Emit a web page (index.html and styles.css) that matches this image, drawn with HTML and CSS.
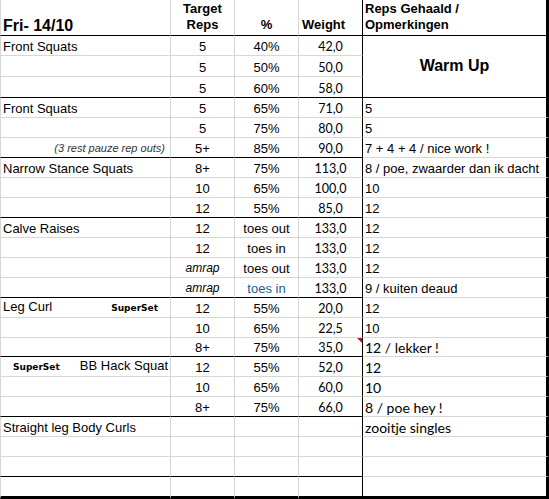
FILE: index.html
```html
<!DOCTYPE html>
<html>
<head>
<meta charset="utf-8">
<link rel="stylesheet" href="styles.css">
</head>
<body>
<div class="sheet">
  <div class="cell a hd title">Fri- 14/10</div>
  <div class="cell hd c"><span class="ctr">Target<br>Reps</span></div>
  <div class="cell hd c">%</div>
  <div class="cell hd d">Weight</div>
  <div class="cell hd e"><span>Reps Gehaald /<br>Opmerkingen</span></div>

  <div class="cell a">Front Squats</div>
  <div class="cell c">5</div>
  <div class="cell c">40%</div>
  <div class="cell d c w">42,0</div>
  <div class="cell e warm">Warm Up</div>

  <div class="cell a"></div>
  <div class="cell c">5</div>
  <div class="cell c">50%</div>
  <div class="cell d c w">50,0</div>

  <div class="cell a end"></div>
  <div class="cell c end">5</div>
  <div class="cell c end">60%</div>
  <div class="cell d c w end">58,0</div>

  <div class="cell a">Front Squats</div>
  <div class="cell c">5</div>
  <div class="cell c">65%</div>
  <div class="cell d c w">71,0</div>
  <div class="cell e">5</div>

  <div class="cell a"></div>
  <div class="cell c">5</div>
  <div class="cell c">75%</div>
  <div class="cell d c w">80,0</div>
  <div class="cell e">5</div>

  <div class="cell a r end"><span class="note">(3 rest pauze rep outs)</span></div>
  <div class="cell c end">5+</div>
  <div class="cell c end">85%</div>
  <div class="cell d c w end">90,0</div>
  <div class="cell e">7 + 4 + 4 / nice work !</div>

  <div class="cell a">Narrow Stance Squats</div>
  <div class="cell c">8+</div>
  <div class="cell c">75%</div>
  <div class="cell d c w">113,0</div>
  <div class="cell e">8 / poe, zwaarder dan ik dacht</div>

  <div class="cell a"></div>
  <div class="cell c">10</div>
  <div class="cell c">65%</div>
  <div class="cell d c w">100,0</div>
  <div class="cell e">10</div>

  <div class="cell a end"></div>
  <div class="cell c end">12</div>
  <div class="cell c end">55%</div>
  <div class="cell d c w end">85,0</div>
  <div class="cell e">12</div>

  <div class="cell a">Calve Raises</div>
  <div class="cell c">12</div>
  <div class="cell c">toes out</div>
  <div class="cell d c w">133,0</div>
  <div class="cell e">12</div>

  <div class="cell a"></div>
  <div class="cell c">12</div>
  <div class="cell c">toes in</div>
  <div class="cell d c w">133,0</div>
  <div class="cell e">12</div>

  <div class="cell a"></div>
  <div class="cell c"><span class="it">amrap</span></div>
  <div class="cell c">toes out</div>
  <div class="cell d c w">133,0</div>
  <div class="cell e">12</div>

  <div class="cell a end"></div>
  <div class="cell c end"><span class="it">amrap</span></div>
  <div class="cell c end blue">toes in</div>
  <div class="cell d c w end">133,0</div>
  <div class="cell e">9 / kuiten deaud</div>

  <div class="cell a"><span class="split">Leg Curl<span class="ss leg">SuperSet</span></span></div>
  <div class="cell c">12</div>
  <div class="cell c">55%</div>
  <div class="cell d c w">20,0</div>
  <div class="cell e">12</div>

  <div class="cell a"></div>
  <div class="cell c">10</div>
  <div class="cell c">65%</div>
  <div class="cell d c w">22,5</div>
  <div class="cell e">10</div>

  <div class="cell a end"></div>
  <div class="cell c end">8+</div>
  <div class="cell c end">75%</div>
  <div class="cell d c w end flag">35,0</div>
  <div class="cell e rem">12 / lekker !</div>

  <div class="cell a"><span class="split"><span class="ss hack">SuperSet</span><span class="push">BB Hack Squat</span></span></div>
  <div class="cell c">12</div>
  <div class="cell c">55%</div>
  <div class="cell d c w">52,0</div>
  <div class="cell e rem">12</div>

  <div class="cell a"></div>
  <div class="cell c">10</div>
  <div class="cell c">65%</div>
  <div class="cell d c w">60,0</div>
  <div class="cell e rem">10</div>

  <div class="cell a end"></div>
  <div class="cell c end">8+</div>
  <div class="cell c end">75%</div>
  <div class="cell d c w end">66,0</div>
  <div class="cell e rem">8 / poe hey !</div>

  <div class="cell a">Straight leg Body Curls</div>
  <div class="cell"></div>
  <div class="cell"></div>
  <div class="cell d"></div>
  <div class="cell e rem">zooitje singles</div>

  <div class="cell a"></div>
  <div class="cell"></div>
  <div class="cell"></div>
  <div class="cell d"></div>
  <div class="cell e"></div>

  <div class="cell a end"></div>
  <div class="cell end"></div>
  <div class="cell end"></div>
  <div class="cell d end"></div>
  <div class="cell e"></div>

  <div class="cell a last"></div>
  <div class="cell last"></div>
  <div class="cell last"></div>
  <div class="cell d last"></div>
  <div class="cell e last"></div>
</div>
</body>
</html>
```

FILE: styles.css
```css
html, body {
  margin: 0;
  padding: 0;
  background: #ffffff;
}

body {
  font-family: "Liberation Sans", Arial, sans-serif;
  font-size: 13px;
  color: #000000;
}

.sheet {
  display: grid;
  width: 549px;
  grid-template-columns: 171px 64px 64px 64px 186px;
  grid-template-rows: 36px 20px 21px 21px repeat(12, 20px) 19px repeat(6, 20px) 22px;
}

.cell {
  box-sizing: border-box;
  position: relative;
  display: flex;
  align-items: flex-end;
  padding: 0 2px 1px 2px;
  line-height: 15px;
  white-space: nowrap;
  overflow: hidden;
  border-right: 1px solid #d6d6d6;
  border-bottom: 1px solid #d6d6d6;
}

.a { border-left: 1px solid #d6d6d6; }
.d { border-right-color: #000000; }
.e { border-right: 3px solid #000000; }

.c { justify-content: center; }
.r { justify-content: flex-end; }

.end { border-bottom-color: #000000; }
.last { border-bottom: 3px solid #000000; }

.hd {
  font-weight: bold;
  line-height: 16px;
  padding-bottom: 2px;
  border-bottom-color: #000000;
}

.hd.d { padding-left: 3px; }

.ctr { text-align: center; }

.title {
  font-size: 16px;
  line-height: 18px;
  padding-bottom: 0;
}

.w {
  font-family: Lato, "Open Sans", sans-serif;
  font-size: 12.5px;
}

.rem {
  font-family: Lato, "Open Sans", sans-serif;
  font-size: 14px;
}

.note {
  font-style: italic;
  font-size: 11px;
  color: #333333;
  padding-right: 3px;
}

.it {
  font-style: italic;
  font-size: 12px;
}

.blue { color: #1c5d96; }

.split {
  display: flex;
  align-items: baseline;
  width: 100%;
}

.ss {
  font-family: "DejaVu Sans", Verdana, sans-serif;
  font-weight: bold;
  font-size: 9px;
}

.leg {
  margin-left: auto;
  margin-right: 10px;
}

.hack { margin-left: 10px; }

.push { margin-left: auto; }

.warm {
  grid-row: span 3;
  align-items: center;
  justify-content: center;
  padding: 0 0 2px 0;
  font-weight: bold;
  font-size: 16px;
  line-height: 18px;
  border-bottom-color: #000000;
}

.flag::after {
  content: "";
  position: absolute;
  top: 0;
  right: 0;
  border-top: 5px solid #c0141c;
  border-left: 5px solid transparent;
}
```
